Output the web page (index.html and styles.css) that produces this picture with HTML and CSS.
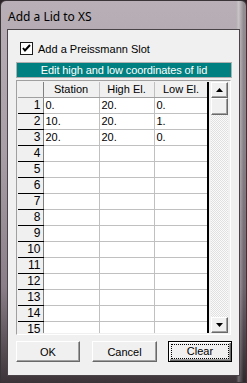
FILE: index.html
```html
<!DOCTYPE html>
<html lang="en">
<head>
  <meta charset="UTF-8" />
  <title>Add a Lid to XS</title>
  <link rel="stylesheet" href="styles.css">
</head>
<body>
  <div class="window">
    <div class="titlebar">Add a Lid to XS</div>
    <div class="client">
      <label class="check-row">
        <span class="checkbox">
          <svg width="9" height="9" viewBox="0 0 9 9"><path d="M1 4 L3 6.5 L8 1" fill="none" stroke="#000" stroke-width="2"/></svg>
        </span>
        Add a Preissmann Slot
      </label>

      <div class="banner">Edit high and low coordinates of lid</div>

      <div class="grid-panel">
        <div class="grid-wrap">
          <table class="grid">
            <colgroup>
              <col class="c-num"><col class="c-sta"><col class="c-high"><col class="c-low">
            </colgroup>
            <thead>
              <tr><th class="corner"></th><th>Station</th><th>High El.</th><th>Low El.</th></tr>
            </thead>
            <tbody>
              <tr><th>1</th><td>0.</td><td>20.</td><td>0.</td></tr>
              <tr><th>2</th><td>10.</td><td>20.</td><td>1.</td></tr>
              <tr><th>3</th><td>20.</td><td>20.</td><td>0.</td></tr>
              <tr><th>4</th><td></td><td></td><td></td></tr>
              <tr><th>5</th><td></td><td></td><td></td></tr>
              <tr><th>6</th><td></td><td></td><td></td></tr>
              <tr><th>7</th><td></td><td></td><td></td></tr>
              <tr><th>8</th><td></td><td></td><td></td></tr>
              <tr><th>9</th><td></td><td></td><td></td></tr>
              <tr><th>10</th><td></td><td></td><td></td></tr>
              <tr><th>11</th><td></td><td></td><td></td></tr>
              <tr><th>12</th><td></td><td></td><td></td></tr>
              <tr><th>13</th><td></td><td></td><td></td></tr>
              <tr><th>14</th><td></td><td></td><td></td></tr>
              <tr><th>15</th><td></td><td></td><td></td></tr>
            </tbody>
          </table>
        </div>
        <div class="scrollbar">
          <div class="sb-btn"><svg width="7" height="4" viewBox="0 0 7 4"><path d="M0 4 L3.5 0 L7 4 Z" fill="#000"/></svg></div>
          <div class="sb-thumb"></div>
          <div class="sb-track"></div>
          <div class="sb-btn"><svg width="7" height="4" viewBox="0 0 7 4"><path d="M0 0 L7 0 L3.5 4 Z" fill="#000"/></svg></div>
        </div>
      </div>

      <div class="buttons">
        <button class="btn">OK</button>
        <button class="btn btn-cancel">Cancel</button>
        <button class="btn btn-default"><span class="focus">Clear</span></button>
      </div>
    </div>
  </div>
</body>
</html>
```

FILE: styles.css
```css
body {
  margin: 0;
  background: #2a2428;
  font-family: "Liberation Sans", Arial, sans-serif;
  font-size: 11px;
}

.window {
  width: 247px;
  height: 383px;
  box-sizing: border-box;
  display: flex;
  flex-direction: column;
  border: 1px solid #3a3438;
  border-radius: 6px 6px 0 0;
  background:
    linear-gradient(90deg, rgba(0,0,0,0) 0%, rgba(0,0,0,0) 96%, rgba(255,255,255,0.25) 97%, rgba(0,0,0,0.2) 99%),
    linear-gradient(180deg, #b8b0b6 0%, #a89fa6 40%, #8a7f88 75%, #3c3439 100%);
}

.titlebar {
  height: 28px;
  padding: 7px 0 0 7px;
  box-sizing: border-box;
  font-family: "Noto Sans", "Liberation Sans", sans-serif;
  font-size: 12px;
  color: #000;
}

.client {
  flex: 1;
  margin: 0 6px 6px 6px;
  border: 1px solid #4a4448;
  background: #f0f0f0;
  display: flex;
  flex-direction: column;
  padding: 12px 7px 0 8px;
}

.check-row {
  display: flex;
  align-items: center;
  height: 13px;
  padding-left: 4px;
  color: #000;
  font-size: 11px;
}

.checkbox {
  width: 11px;
  height: 11px;
  border: 1px solid #1c1c1c;
  background: #fff;
  display: flex;
  align-items: center;
  justify-content: center;
  margin-right: 5px;
}

.banner {
  margin-top: 7px;
  height: 14px;
  border: 1px solid #b0b0b0;
  background: #008080;
  color: #fff;
  font-size: 11px;
  letter-spacing: -0.1px;
  line-height: 14px;
  text-align: center;
}

.grid-panel {
  margin-top: 2px;
  margin-right: 1px;
  height: 251px;
  display: flex;
  border-top: 1px solid #a0a0a0;
  border-left: 1px solid #a0a0a0;
  border-right: 1px solid #fff;
  border-bottom: 1px solid #fff;
  padding: 1px 2px 1px 1px;
}

.grid-wrap {
  width: 191px;
  height: 251px;
  overflow: hidden;
  border-right: 2px solid #000;
  background: #fff;
}

.grid {
  border-collapse: collapse;
  table-layout: fixed;
  width: 190px;
  font-size: 11px;
}

.c-num { width: 25px; }
.c-sta { width: 56px; }
.c-high { width: 55px; }
.c-low { width: 54px; }

.grid th,
.grid td {
  height: 15px;
  padding: 0 2px;
  border-right: 1px solid #c0c0c0;
  border-bottom: 1px solid #c0c0c0;
  line-height: 15px;
  white-space: nowrap;
  overflow: hidden;
  color: #000;
}

.grid thead th {
  background: #f0f0f0;
  font-weight: normal;
  text-align: center;
  border-bottom: 1px solid #a0a0a0;
}

.grid tbody th {
  background: #f0f0f0;
  font-weight: normal;
  text-align: right;
  padding-right: 2px;
  font-size: 12px;
  border-bottom: 1px solid #000;
  border-right: 1px solid #808080;
}

.grid .corner {
  border-right: 1px solid #808080;
}

.scrollbar {
  width: 17px;
  margin-left: 2px;
  display: flex;
  flex-direction: column;
  background-color: #f4f4f4;
  background-image: repeating-conic-gradient(#e0e0e0 0% 25%, #fafafa 0% 50%);
  background-size: 2px 2px;
}

.sb-btn,
.sb-thumb {
  height: 16px;
  box-sizing: border-box;
  background: #f0f0f0;
  border-top: 1px solid #fff;
  border-left: 1px solid #fff;
  border-right: 1px solid #696969;
  border-bottom: 1px solid #696969;
  box-shadow: inset -1px -1px 0 #a0a0a0;
  display: flex;
  align-items: center;
  justify-content: center;
}

.sb-thumb {
  height: 17px;
}

.sb-track {
  flex: 1;
}

.buttons {
  display: flex;
  margin-top: 6px;
}

.btn {
  width: 64px;
  height: 21px;
  box-sizing: border-box;
  margin: 0 12px 0 0;
  padding: 0;
  background: #f0f0f0;
  border-top: 1px solid #fff;
  border-left: 1px solid #fff;
  border-right: 1px solid #696969;
  border-bottom: 1px solid #696969;
  box-shadow: inset -1px -1px 0 #a0a0a0;
  font-family: "Liberation Sans", Arial, sans-serif;
  font-size: 11px;
  color: #000;
}

.btn-cancel {
  width: 65px;
  margin-right: 11px;
}

.btn-default {
  border: 1px solid #000;
  box-shadow: inset 1px 1px 0 #fff, inset -1px -1px 0 #696969, inset -2px -2px 0 #a0a0a0;
  padding: 2px;
  margin-right: 0;
}

.focus {
  display: block;
  height: 13px;
  line-height: 13px;
  border: 1px dotted #000;
}
```
